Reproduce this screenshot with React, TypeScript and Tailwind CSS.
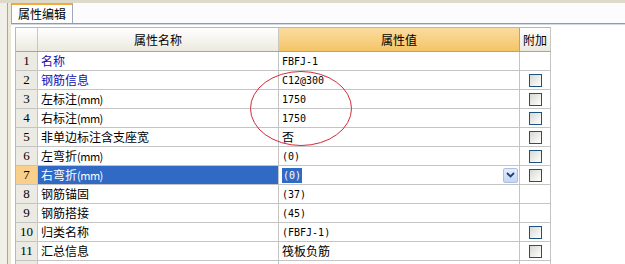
import React from "react";

const rows: { n: number; name: string; value: string; blue?: boolean; check: boolean; sel?: boolean }[] = [
  { n: 1, name: "名称", value: "FBFJ-1", blue: true, check: false },
  { n: 2, name: "钢筋信息", value: "C12@300", blue: true, check: true },
  { n: 3, name: "左标注(mm)", value: "1750", check: true },
  { n: 4, name: "右标注(mm)", value: "1750", check: true },
  { n: 5, name: "非单边标注含支座宽", value: "否", check: true },
  { n: 6, name: "左弯折(mm)", value: "(0)", check: true },
  { n: 7, name: "右弯折(mm)", value: "(0)", check: true, sel: true },
  { n: 8, name: "钢筋锚固", value: "(37)", check: false },
  { n: 9, name: "钢筋搭接", value: "(45)", check: false },
  { n: 10, name: "归类名称", value: "(FBFJ-1)", check: true },
  { n: 11, name: "汇总信息", value: "筏板负筋", check: true },
  { n: 12, name: "", value: "", check: false },
];

const font = { fontFamily: '"Noto Sans CJK SC", "Liberation Sans", sans-serif' };
const mono = { fontFamily: '"DejaVu Sans Mono", "Noto Sans CJK SC", monospace', fontSize: "10px" };

const isAscii = (s: string) => /^[\x00-\x7f]*$/.test(s);

function Check() {
  return <div className="w-[13px] h-[13px] border border-[#1c5180] bg-gradient-to-br from-[#d8d8d2] to-white" />;
}

function NameText({ s }: { s: string }) {
  const m = s.match(/^(.*?)(\(mm\))$/);
  if (!m) return <>{s}</>;
  return (
    <>
      {m[1]}
      <span className="text-[11px] tracking-[-0.5px]">{m[2]}</span>
    </>
  );
}

export default function App() {
  return (
    <div className="w-[625px] h-[264px] overflow-hidden bg-white flex flex-col text-[12px] text-black" style={font}>
      <div className="h-[3px] bg-[#dedacb] shrink-0" />
      <div className="flex flex-1 min-h-0">
        <div className="w-[11px] shrink-0 flex bg-[#ece9d8]">
          <div className="w-[7px] bg-[#f0efe8]" />
          <div className="w-px bg-[#a9a79c]" />
          <div className="w-[3px] bg-[#ece9d8]" />
        </div>
        <div className="flex-1 flex flex-col min-w-0">
          <div className="h-[20px] shrink-0 flex bg-[#fcfcfe]">
            <div className="w-[62px] h-[20px] bg-white border-t-2 border-t-[#f2a93b] border-x border-x-[#a0a8b4] flex items-center pl-[6px] leading-none text-[12px]">
              属性编辑
            </div>
          </div>
          <div className="h-px bg-[#8d9cb0] shrink-0" />
          <div className="h-px bg-[#d4dae2] shrink-0" />
          <div className="relative pl-[4px] pt-[2px] flex-1">
            <div className="w-[536px] border-l border-t border-[#b8b8b8]">
              <div className="flex h-[24px] border-b border-[#a5a59e]">
                <div className="w-[22px] border-r border-[#c8c8c0] bg-gradient-to-b from-white to-[#ebe9df]" />
                <div className="w-[241px] border-r border-[#c8c8c0] bg-gradient-to-b from-white to-[#ebe9df] flex items-center justify-center">
                  属性名称
                </div>
                <div className="w-[241px] border-r border-[#c8a060] bg-gradient-to-b from-[#fadca0] to-[#f3c565] flex items-center justify-center">
                  属性值
                </div>
                <div className="w-[31px] border-r border-[#c8c8c0] bg-gradient-to-b from-white to-[#ebe9df] flex items-center justify-center">
                  附加
                </div>
              </div>
              {rows.map((r) => (
                <div key={r.n} className="flex h-[19px] border-b border-[#c4c4c4]">
                  <div
                    className={`w-[22px] border-r border-[#c4c4c4] flex items-center justify-center text-[13px] ${
                      r.sel ? "bg-[#f8d08a]" : "bg-[#ecebe3]"
                    }`}
                    style={{ fontFamily: '"Liberation Serif", serif' }}
                  >
                    {r.n <= 11 ? r.n : ""}
                  </div>
                  <div
                    className={`w-[241px] border-r border-[#c4c4c4] flex items-center pl-[3px] ${
                      r.sel ? "bg-[#316ac5] text-white" : r.blue ? "text-[#1010b0]" : ""
                    }`}
                  >
                    <NameText s={r.name} />
                  </div>
                  <div className="w-[241px] border-r border-[#c4c4c4] flex items-center pl-[3px] pr-[1px]">
                    {r.sel ? (
                      <>
                        <span className="bg-[#316ac5] text-white px-[1px]" style={mono}>{r.value}</span>
                        <div className="ml-auto w-[15px] h-[15px] border border-[#a9c0e6] rounded-[2px] bg-gradient-to-b from-[#e4edfc] to-[#c3d6f4] flex items-center justify-center">
                          <svg width="9" height="6" viewBox="0 0 9 6">
                            <path d="M1 1 L4.5 4.5 L8 1" stroke="#1f3e78" strokeWidth="1.8" fill="none" />
                          </svg>
                        </div>
                      </>
                    ) : (
                      <span style={isAscii(r.value) ? mono : undefined}>{r.value}</span>
                    )}
                  </div>
                  <div className="w-[31px] border-r border-[#c4c4c4] flex items-center justify-center">
                    {r.check && <Check />}
                  </div>
                </div>
              ))}
            </div>
            <svg className="absolute left-[238px] top-[45px]" width="104" height="77" viewBox="0 0 104 77">
              <ellipse cx="52" cy="38.5" rx="50.5" ry="37" stroke="#d42a3a" strokeWidth="1" fill="none" />
            </svg>
          </div>
        </div>
      </div>
    </div>
  );
}
